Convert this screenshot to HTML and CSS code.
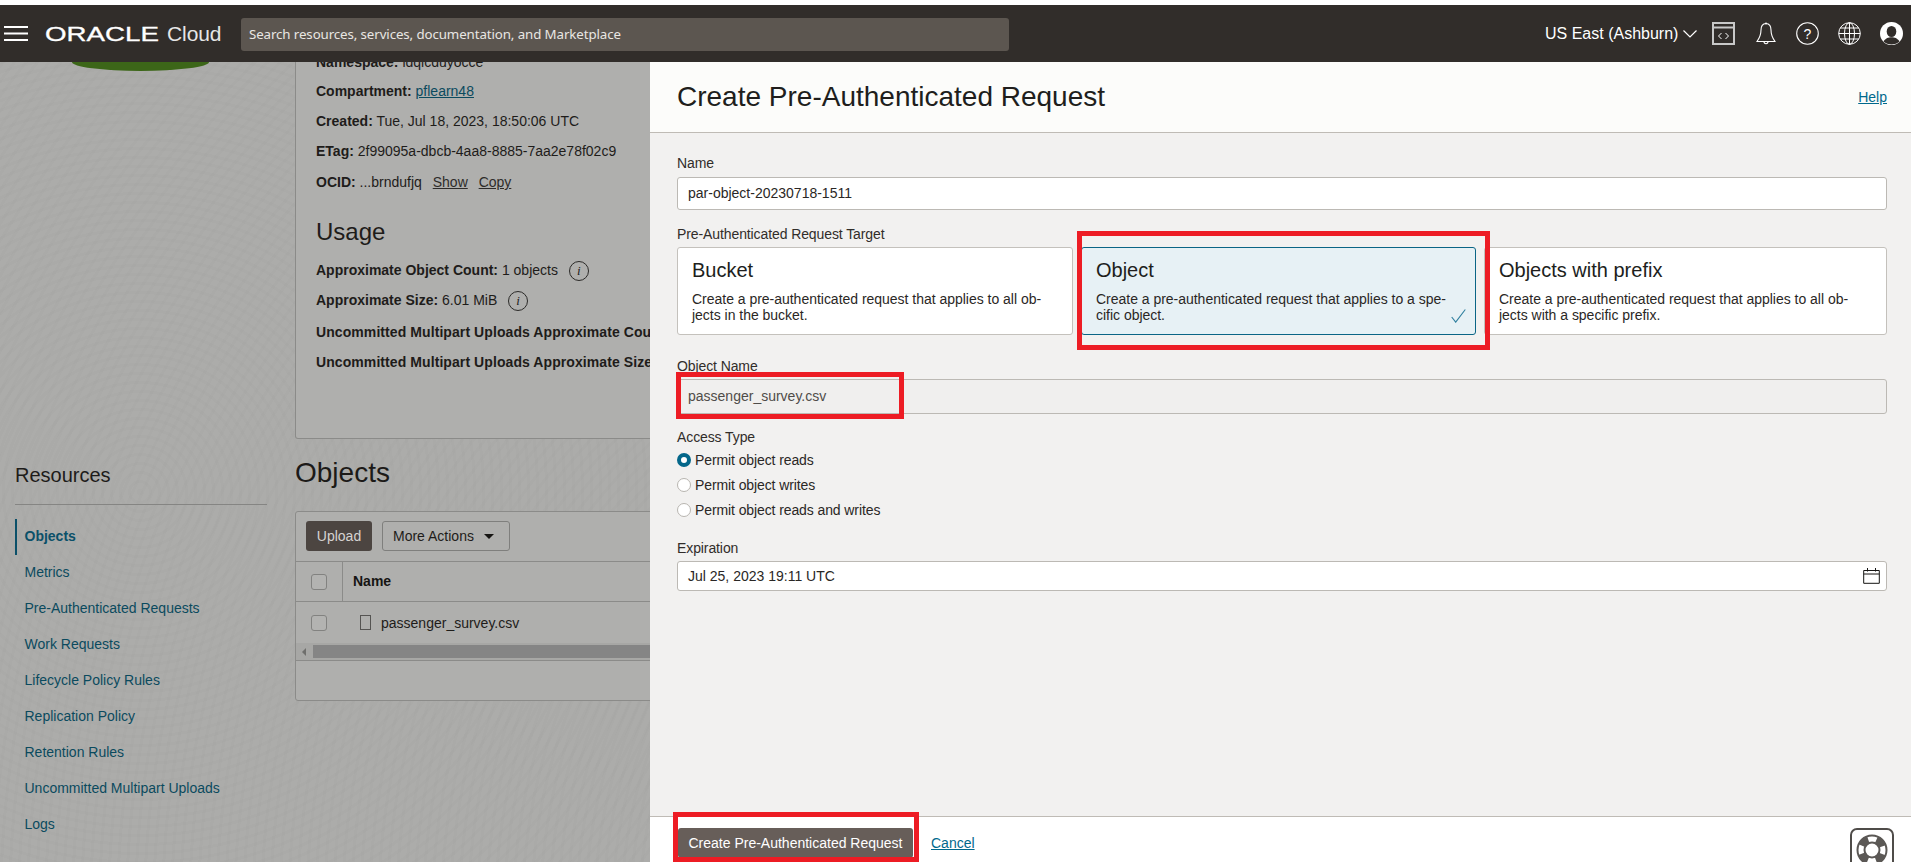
FILE: index.html
```html
<!DOCTYPE html>
<html lang="en">
<head>
<meta charset="utf-8">
<title>Create Pre-Authenticated Request</title>
<link rel="stylesheet" href="styles.css">
</head>
<body>
<header class="topbar">
  <svg class="burger" width="24" height="15" viewBox="0 0 24 15"><path d="M0 1h24M0 7.500h24M0 14h24" stroke="#fff" stroke-width="2"/></svg>
  <div class="brand"><span class="brand-o">ORACLE</span><span class="brand-c">Cloud</span></div>
  <div class="search">Search resources, services, documentation, and Marketplace</div>
  <div class="region">US East (Ashburn)
    <svg width="14" height="8" viewBox="0 0 14 8"><path d="M.5.500 7 7l6.500-6.500" fill="none" stroke="#fff" stroke-width="1.200"/></svg>
  </div>
  <svg class="ico-code" width="23" height="23" viewBox="0 0 23 23"><path d="M1 1h21v21H1zM1 5.500h21" fill="none" stroke="#c8c8c8" stroke-width="2"/><path d="M9.500 11l-3 3 3 3M13.500 11l3 3-3 3" fill="none" stroke="#fff" stroke-width="1"/></svg>
  <svg class="ico-bell" width="20" height="24" viewBox="0 0 20 24"><path d="M10 1.500c-3.500 0-5 2.800-5 6.500 0 5-1.500 8-4 11.500h18c-2.500-3.500-4-6.500-4-11.500 0-3.700-1.500-6.500-5-6.500zM8 19.500c0 3 4 3 4 0" fill="none" stroke="#fff" stroke-width="1.100"/><circle cx="10" cy="1.500" r="1" fill="#fff"/></svg>
  <svg class="ico-help" width="23" height="23" viewBox="0 0 23 23"><circle cx="11.500" cy="11.500" r="10.800" fill="none" stroke="#fff" stroke-width="1.100"/><text x="11.500" y="16.500" text-anchor="middle" class="q">?</text></svg>
  <svg class="ico-globe" width="23" height="23" viewBox="0 0 23 23"><g fill="none" stroke="#fff" stroke-width="1"><circle cx="11.500" cy="11.500" r="10.800"/><ellipse cx="11.500" cy="11.500" rx="5" ry="10.800"/><path d="M11.500.7v21.600M.7 11.500h21.600M2.300 6h18.400M2.300 17h18.400"/></g></svg>
  <svg class="ico-user" width="23" height="23" viewBox="0 0 23 23"><circle cx="11.500" cy="11.500" r="11.500" fill="#fff"/><ellipse cx="11.500" cy="9.500" rx="4.800" ry="5.500" fill="#312d2a"/><path d="M3.500 19.500c2-3.500 5-4.300 8-4.300s6 .8 8 4.300c-2 2-5 3-8 3s-6-1-8-3z" fill="#312d2a"/></svg>
</header>

<main class="page">
  <aside class="sidebar">
    <div class="bucket-art"></div>
    <h2 class="res-title">Resources</h2>
    <nav class="res-nav">
      <a class="res-link active">Objects</a>
      <a class="res-link">Metrics</a>
      <a class="res-link">Pre-Authenticated Requests</a>
      <a class="res-link">Work Requests</a>
      <a class="res-link">Lifecycle Policy Rules</a>
      <a class="res-link">Replication Policy</a>
      <a class="res-link">Retention Rules</a>
      <a class="res-link">Uncommitted Multipart Uploads</a>
      <a class="res-link">Logs</a>
    </nav>
  </aside>

  <section class="content">
    <div class="details">
      <p class="row row-ns"><b>Namespace:</b> idqicduyocce</p>
      <p class="row"><b>Compartment:</b> <a class="plink">pflearn48</a></p>
      <p class="row"><b>Created:</b> Tue, Jul 18, 2023, 18:50:06 UTC</p>
      <p class="row"><b>ETag:</b> 2f99095a-dbcb-4aa8-8885-7aa2e78f02c9</p>
      <p class="row row-ocid"><b>OCID:</b> ...brndufjq <a class="ulink first">Show</a> <a class="ulink">Copy</a></p>
      <h2 class="usage">Usage</h2>
      <p class="row"><b>Approximate Object Count:</b> 1 objects <span class="info"><i>i</i></span></p>
      <p class="row"><b>Approximate Size:</b> 6.01 MiB <span class="info"><i>i</i></span></p>
      <p class="row row-wide row-first"><b>Uncommitted Multipart Uploads Approximate Count:</b></p>
      <p class="row row-wide"><b>Uncommitted Multipart Uploads Approximate Size:</b></p>
    </div>
    <h1 class="objects-title">Objects</h1>
    <div class="table-card">
      <div class="toolbar">
        <span class="btn-upload">Upload</span>
        <span class="btn-more">More Actions<span class="caret"></span></span>
      </div>
      <div class="t-head">
        <div class="cell-check"><span class="checkbox"></span></div>
        <div class="cell-name"><b>Name</b></div>
      </div>
      <div class="t-row">
        <div class="cell-check"><span class="checkbox"></span></div>
        <div class="cell-file"><span class="file-ico"></span>passenger_survey.csv</div>
      </div>
      <div class="hscroll"><span class="arrow"></span><span class="thumb"></span></div>
    </div>
  </section>
</main>

<aside class="drawer">
  <div class="d-head">
    <h1 class="d-title">Create Pre-Authenticated Request</h1>
    <a class="d-help">Help</a>
  </div>
  <div class="d-body">
    <label class="f-label f-name">Name</label>
    <div class="input">par-object-20230718-1511</div>
    <label class="f-label f-target">Pre-Authenticated Request Target</label>
    <div class="cards">
      <div class="card">
        <h3>Bucket</h3>
        <p>Create a pre-authenticated request that applies to all ob-<br>jects in the bucket.</p>
      </div>
      <div class="card selected">
        <h3>Object</h3>
        <p>Create a pre-authenticated request that applies to a spe-<br>cific object.</p>
        <svg class="check" width="15" height="14" viewBox="0 0 15 14"><path d="M.7 8l4 5.200L14.300.5" fill="none" stroke="#31809f" stroke-width="1.100"/></svg>
      </div>
      <div class="card">
        <h3>Objects with prefix</h3>
        <p>Create a pre-authenticated request that applies to all ob-<br>jects with a specific prefix.</p>
      </div>
    </div>
    <label class="f-label f-objname">Object Name</label>
    <div class="input disabled">passenger_survey.csv</div>
    <label class="f-label f-access">Access Type</label>
    <div class="radios">
      <div class="radio-row"><span class="radio on"></span>Permit object reads</div>
      <div class="radio-row"><span class="radio"></span>Permit object writes</div>
      <div class="radio-row"><span class="radio"></span>Permit object reads and writes</div>
    </div>
    <label class="f-label f-exp">Expiration</label>
    <div class="input date">Jul 25, 2023 19:11 UTC
      <svg width="17" height="16" viewBox="0 0 17 16"><path d="M.7 2.500h15.600v12.800H.7zM.7 6h15.600M4.500 0v3.500M12.500 0v3.500" fill="none" stroke="#161513" stroke-width="1"/></svg>
    </div>
  </div>
  <div class="d-foot">
    <span class="btn-create">Create Pre-Authenticated Request</span>
    <a class="d-cancel">Cancel</a>
    <div class="support">
      <svg width="32" height="32" viewBox="0 0 32 32"><g fill="none" stroke="#5b5855"><circle cx="16" cy="16" r="14.500" stroke-width="2"/><circle cx="16" cy="16" r="7.500" stroke-width="2"/><circle cx="16" cy="16" r="11" stroke-width="7" stroke-dasharray="9 8.280" stroke-dashoffset="-4.140"/></g></svg>
    </div>
  </div>
</aside>

<div class="mark mark-object"></div>
<div class="mark mark-name"></div>
<div class="mark mark-create"></div>
</body>
</html>
```

FILE: styles.css
```css
* { box-sizing: border-box; }
html, body { margin: 0; height: 100%; overflow: hidden; }
body {
  font-family: "Liberation Sans", Arial, sans-serif;
  font-size: 14px;
  color: #161513;
  background: #fff;
  padding-top: 5px;
}
h1, h2, h3, p { margin: 0; font-weight: 400; }

/* top bar */
.topbar {
  height: 57px;
  background: #312d2a;
  display: flex;
  align-items: center;
  color: #fff;
  padding-left: 4px;
}
.burger { flex: none; }
.brand { margin-left: 17px; width: 196px; flex: none; display: flex; align-items: baseline; white-space: nowrap; }
.brand-o { width: 122px; flex: none; font-size: 19.500px; transform: scaleX(1.420); transform-origin: left center; -webkit-text-stroke: .3px #fff; }
.brand-c { font-size: 21px; color: #e6e6e6; letter-spacing: -.1px; }
.search {
  width: 768px;
  flex: none;
  height: 33px;
  line-height: 33px;
  background: #5c5650;
  border-radius: 3px;
  padding-left: 8px;
  color: #e9e6e3;
  font-size: 13.300px;
  font-family: "Noto Sans", sans-serif;
  letter-spacing: -.1px;
  margin-top: 1px;
}
.region {
  margin-left: 536px;
  width: 144px;
  flex: none;
  font-size: 16px;
  display: flex;
  align-items: center;
  gap: 5px;
  white-space: nowrap;
}
.region svg { flex: none; }
.ico-code { margin-left: 23px; flex: none; }
.ico-bell { margin-left: 21px; flex: none; }
.ico-help { margin-left: 20px; flex: none; }
.ico-globe { margin-left: 19px; flex: none; }
.ico-user { margin-left: 19px; flex: none; }
.q { font: 14px "Liberation Sans", sans-serif; fill: #fff; }

/* dimmed page */
.page {
  height: 800px;
  overflow: hidden;
  display: flex;
  background-color: #acacaa;
  background-image:
    repeating-radial-gradient(circle at 140px 430px, rgba(0,0,0,.012) 0 3px, transparent 3px 9px),
    repeating-radial-gradient(circle at 1100px 850px, rgba(0,0,0,.012) 0 3px, transparent 3px 9px);
}
.sidebar { width: 295px; flex: none; padding-left: 15px; }
.bucket-art {
  width: 137px;
  height: 9px;
  margin-left: 57px;
  background: #3c6618;
  border-radius: 0 0 50% 50% / 0 0 100% 100%;
}
.res-title { margin-top: 392px; font-size: 20px; line-height: 24px; color: #1e1c1a; width: 252px; padding-bottom: 17px; border-bottom: 1px solid #858583; }
.res-nav { margin-top: 14px; display: flex; flex-direction: column; }
.res-link { height: 36px; line-height: 35px; padding-left: 9.500px; color: #0b4a5e; font-size: 14px; }
.res-link.active { font-weight: 700; border-left: 2px solid #0b5069; padding-left: 7.500px; color: #0b5069; }

.content { flex: none; width: 360px; }
.details {
  width: 700px;
  height: 377px;
  background: #afafad;
  border: 1px solid #8b8b89;
  border-top: 0;
  padding-left: 20px;
  border-radius: 0 0 0 3px;
  color: #1e1c1a;
}
.row { height: 30px; line-height: 30px; font-size: 14px; white-space: nowrap; }
.row-ns { height: 14px; line-height: 0; }
.row-ocid { margin-top: 1px; }
.row-wide { letter-spacing: .08px; }
.row-first { margin-top: 2px; }
.plink { color: #0b4a5e; text-decoration: underline; }
.ulink { text-decoration: underline; color: #2e2c2a; margin-left: 7px; }
.usage { font-size: 24px; line-height: 28px; margin: 21px 0 9px; color: #1e1c1a; }
.info {
  display: inline-flex; align-items: center; justify-content: center;
  width: 20px; height: 20px; margin-left: 7px; border: 1.500px solid #2b2a28; border-radius: 50%;
  font: italic 13px "Liberation Serif", serif; vertical-align: middle;
}
.objects-title { font-size: 28px; line-height: 34px; margin-top: 17px; color: #1c1a18; }
.table-card {
  margin-top: 21px;
  width: 700px;
  height: 190px;
  background: #afafad;
  border: 1px solid #8b8b89;
  border-radius: 3px;
}
.toolbar { height: 50px; padding: 9px 0 0 10px; display: flex; gap: 10px; border-bottom: 1px solid #8b8b89; }
.btn-upload {
  width: 66px; height: 30px; line-height: 30px; text-align: center;
  background: #4c4541; color: #d6d3d1; border-radius: 3px;
}
.btn-more {
  width: 128px; height: 30px; line-height: 28px; padding-left: 10px;
  border: 1px solid #7f7f7d; border-radius: 3px; color: #1e1c1a; display: flex; align-items: center;
}
.caret { margin-left: 10px; border: 5px solid transparent; border-top-color: #161513; border-bottom: 0; }
.t-head { height: 40px; display: flex; border-bottom: 1px solid #8b8b89; align-items: stretch; }
.cell-check { width: 47px; flex: none; display: flex; align-items: center; padding-left: 15px; }
.t-head .cell-check { border-right: 1px solid #8b8b89; }
.cell-name { padding-left: 10px; line-height: 38px; }
.checkbox { width: 16px; height: 16px; border: 1px solid #828280; border-radius: 3px; background: #b3b3b1; }
.t-row { height: 41px; display: flex; align-items: center; }
.cell-file { display: flex; align-items: center; padding-left: 17px; color: #1e1c1a; }
.file-ico { width: 11px; height: 15px; border: 1.500px solid #555452; margin-right: 10px; }
.hscroll { height: 18px; background: #a7a7a5; display: flex; align-items: center; border-bottom: 1px solid #8b8b89; }
.arrow { margin-left: 6px; border: 4px solid transparent; border-right-color: #6f6f6d; border-left: 0; }
.thumb { margin-left: 7px; width: 640px; height: 13px; background: #858585; }

/* drawer */
.drawer {
  position: absolute;
  left: 650px; top: 62px; right: 0; bottom: 0;
  background: #f2f1f0;
  display: flex;
  flex-direction: column;
}
.d-head {
  height: 71px; flex: none;
  background: #fcfcfa;
  border-bottom: 1px solid #bfbbb5;
  display: flex; align-items: center; justify-content: space-between;
  padding: 0 24px 1px 27px;
}
.d-title { font-size: 28px; color: #201e1c; }
.d-help { color: #00688c; text-decoration: underline; font-size: 14px; }
.d-body { flex: 1; padding: 0 24px 0 27px; }
.f-label { display: block; line-height: 16px; color: #312d2a; font-size: 14px; letter-spacing: -.1px; }
.f-name { margin-top: 22px; }
.f-target { margin-top: 16px; }
.f-objname { margin-top: 23px; }
.f-access { margin-top: 15px; }
.f-exp { margin-top: 18px; }
.input {
  height: 33px; margin-top: 6px;
  background: #fff;
  border: 1px solid #bcb9b4;
  border-radius: 3px;
  padding-left: 10px;
  line-height: 31px;
  color: #2a2725;
}
.input.disabled { height: 35px; margin-top: 5px; background: #f0efee; line-height: 33px; color: #4f4c49; }
.input.date { height: 30px; margin-top: 5px; line-height: 28px; display: flex; align-items: center; justify-content: space-between; padding-right: 6px; }
.cards { display: grid; grid-template-columns: 396px 395px 1fr; gap: 8px; margin-top: 5px; }
.card {
  height: 88px;
  background: #fff;
  border: 1px solid #c4c1bc;
  border-radius: 3px;
  padding: 10px 14px;
  position: relative;
}
.card h3 { font-size: 20px; line-height: 24px; color: #201e1c; }
.card p { margin-top: 9px; font-size: 14px; line-height: 16px; color: #2a2725; letter-spacing: -.02px; }
.card.selected { background: #e7f1f5; border-color: #0b6585; }
.check { position: absolute; right: 9px; bottom: 11px; }
.radios { margin-top: 2px; }
.radio-row { height: 25px; display: flex; align-items: center; gap: 4px; color: #2a2725; letter-spacing: -.1px; }
.radio { width: 14px; height: 14px; border-radius: 50%; border: 1px solid #b8b5b0; background: #fff; }
.radio.on { border: 4.500px solid #04678a; background: #fff; }
.d-foot {
  height: 46px; flex: none;
  background: #fff;
  border-top: 1px solid #bfbbb5;
  display: flex; align-items: flex-start;
  padding: 11px 17px 0 28px;
  position: relative;
  overflow: hidden;
}
.btn-create {
  width: 235px; height: 30px; line-height: 30px; text-align: center;
  background: #675e59; color: #fff; border-radius: 3px; font-size: 14px;
}
.d-cancel { margin-left: 18px; line-height: 30px; color: #00688c; text-decoration: underline; }
.support {
  margin-left: auto;
  width: 44px; height: 44px;
  border: 2px solid #4f4c49; border-radius: 7px;
  display: flex; align-items: center; justify-content: center;
  background: #fff;
  flex: none;
}

/* red annotation frames drawn over the screenshot */
.mark { position: absolute; border: 5px solid #ed1c24; }
.mark-object { left: 1077px; top: 231px; width: 413px; height: 119px; }
.mark-name { left: 676px; top: 372px; width: 228px; height: 47px; }
.mark-create { left: 673px; top: 812px; width: 246px; height: 50px; }
```
